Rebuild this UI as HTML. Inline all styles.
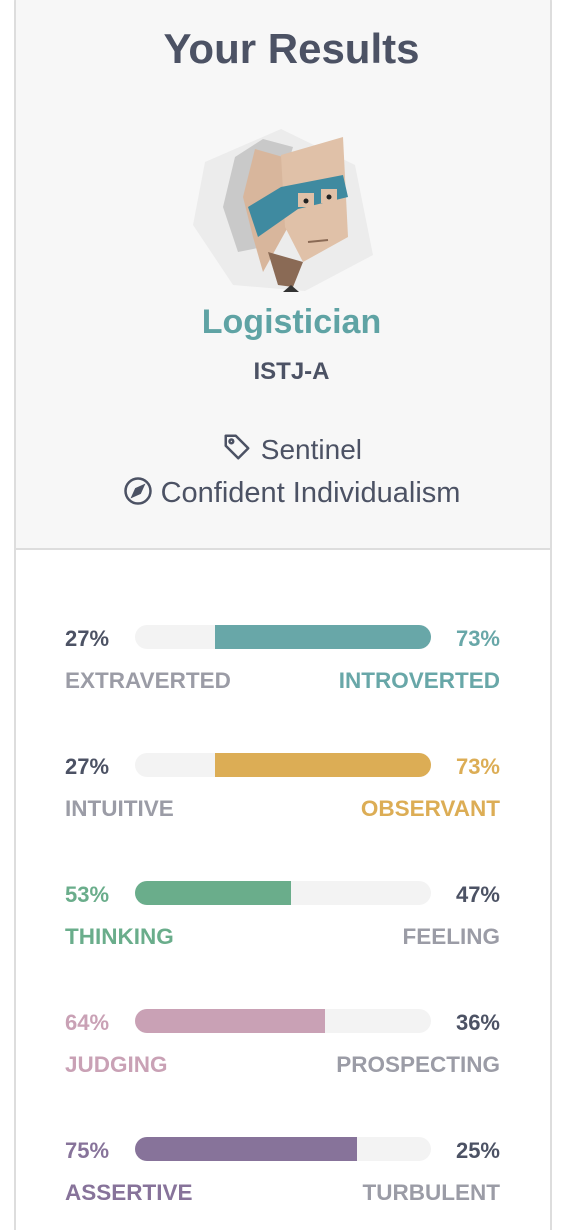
<!DOCTYPE html>
<html style="width:583px;height:1230px;overflow:hidden"><head><meta charset="utf-8"><style>
*{margin:0;padding:0;box-sizing:border-box}
body{width:583px;height:1230px;background:#fff;font-family:"Liberation Sans",sans-serif;position:relative;overflow:hidden;color:#4c5264}
.card{position:absolute;left:14px;top:-12px;width:538px;height:1252px;border:2px solid #ddd;border-bottom:none;border-radius:14px 14px 0 0;background:#fff;overflow:hidden}
.head{position:absolute;left:0;top:0;width:100%;height:560px;background:#f7f7f7;border-bottom:2px solid #ddd}
.t{position:absolute;left:0;width:583px;text-align:center}
.row{position:absolute;left:0;width:583px}
.pl{position:absolute;left:65px;top:1px;font-size:22px;font-weight:bold;color:#4c5264}
.pr{position:absolute;right:83px;top:1px;font-size:22px;font-weight:bold;color:#4c5264}
.bar{position:absolute;left:135px;width:296px;height:24px;border-radius:12px;background:#f3f3f3;overflow:hidden}
.bar i{position:absolute;top:0;height:24px}
.ll{position:absolute;left:65px;top:43px;font-size:22.5px;font-weight:bold;color:#9b9ca6}
.lr{position:absolute;right:83px;top:43px;font-size:22.5px;font-weight:bold;color:#9b9ca6}
</style></head><body>
<div class="card"><div class="head"></div></div>
<div class="t" style="top:25px;font-size:42px;font-weight:bold;color:#4c5264">Your Results</div>
<svg style="position:absolute;left:193px;top:127px" width="180" height="165" viewBox="0 0 180 165">
<polygon points="88,2 162,38 180,128 112,164 40,158 0,98 12,35" fill="#ececec"/>
<polygon points="42,30 70,12 100,20 70,120 45,125 30,80" fill="#c9c9c9"/>
<polygon points="62,22 90,30 95,100 70,145 60,110 50,70" fill="#d8b69c"/>
<polygon points="88,28 150,10 155,110 110,135 92,100" fill="#e0c1a8"/>
<polygon points="75,125 110,135 100,160 85,158" fill="#8a6a55"/>
<polygon points="55,80 88,60 150,48 155,70 105,82 65,110" fill="#3f8aa0"/>
<rect x="105" y="66" width="16" height="14" fill="#e0c1a8"/><rect x="128" y="62" width="16" height="14" fill="#e0c1a8"/>
<circle cx="113" cy="74" r="2.5" fill="#222"/><circle cx="136" cy="70" r="2.5" fill="#222"/>
<line x1="115" y1="115" x2="135" y2="113" stroke="#8a6a55" stroke-width="2"/>
<polygon points="90,165 98,158 106,165" fill="#333"/>
</svg>
<div class="t" style="top:303px;font-size:34px;font-weight:bold;color:#5fa3a4">Logistician</div>
<div class="t" style="top:358px;font-size:24px;font-weight:bold;color:#4c5264">ISTJ-A</div>
<div class="t" style="top:432px;font-size:28px;color:#4c5264">
<svg width="32" height="30" viewBox="0 0 24 24" style="vertical-align:-3px" fill="none" stroke="#4c5264" stroke-width="2" stroke-linejoin="round"><path d="M3 3h8l10 10-8 8L3 11z"/><circle cx="7.5" cy="7.5" r="1.5"/></svg> Sentinel</div>
<div class="t" style="top:476px;font-size:29px;color:#4c5264">
<svg width="30" height="30" viewBox="0 0 24 24" style="vertical-align:-4px" fill="none" stroke="#4c5264" stroke-width="2"><circle cx="12" cy="12" r="10"/><path d="M16 8l-2.5 5.5L8 16l2.5-5.5z" fill="#4c5264"/></svg> Confident Individualism</div>

<div class="row" style="top:625px"><span class="pl">27%</span><div class="bar"><i style="left:80px;width:216px;background:#68a7a8"></i></div><span class="pr" style="color:#68a7a8">73%</span><span class="ll">EXTRAVERTED</span><span class="lr" style="color:#68a7a8">INTROVERTED</span></div>
<div class="row" style="top:753px"><span class="pl">27%</span><div class="bar"><i style="left:80px;width:216px;background:#dcad55"></i></div><span class="pr" style="color:#dcad55">73%</span><span class="ll">INTUITIVE</span><span class="lr" style="color:#dcad55">OBSERVANT</span></div>
<div class="row" style="top:881px"><span class="pl" style="color:#6aad8b">53%</span><div class="bar"><i style="left:0;width:156px;background:#6aad8b"></i></div><span class="pr">47%</span><span class="ll" style="color:#6aad8b">THINKING</span><span class="lr">FEELING</span></div>
<div class="row" style="top:1009px"><span class="pl" style="color:#c9a1b5">64%</span><div class="bar"><i style="left:0;width:190px;background:#c9a1b5"></i></div><span class="pr">36%</span><span class="ll" style="color:#c9a1b5">JUDGING</span><span class="lr">PROSPECTING</span></div>
<div class="row" style="top:1137px"><span class="pl" style="color:#87739a">75%</span><div class="bar"><i style="left:0;width:222px;background:#87739a"></i></div><span class="pr">25%</span><span class="ll" style="color:#87739a">ASSERTIVE</span><span class="lr">TURBULENT</span></div>
</body></html>
